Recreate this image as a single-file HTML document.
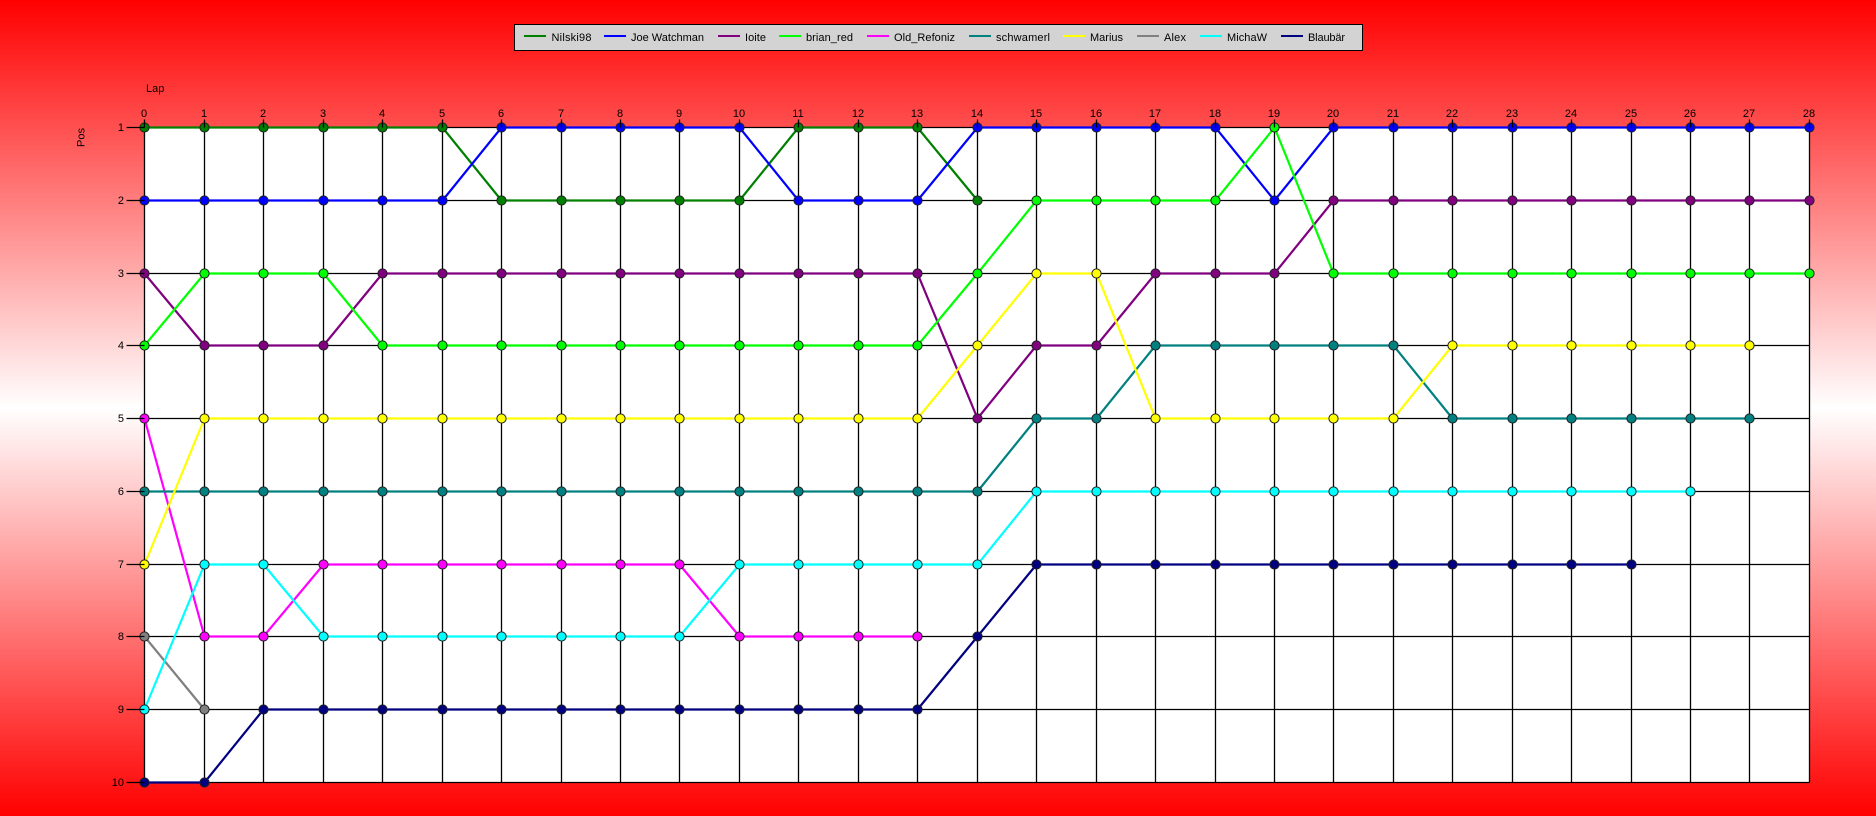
<!DOCTYPE html>
<html>
<head>
<meta charset="utf-8">
<title>Race chart</title>
<style>
html,body{margin:0;padding:0;width:1876px;height:816px;overflow:hidden;background:#fff}
svg{display:block}
text{font-family:"Liberation Sans",sans-serif;font-size:11px;fill:#000}
</style>
</head>
<body>
<svg xmlns="http://www.w3.org/2000/svg" width="1876" height="816" viewBox="0 0 1876 816">
<defs>
<linearGradient id="bg" x1="0" y1="0" x2="0" y2="1">
<stop offset="0" stop-color="#ff0000"/><stop offset=".5" stop-color="#ffffff"/><stop offset="1" stop-color="#ff0000"/>
</linearGradient>
<marker id="m1" markerUnits="userSpaceOnUse" markerWidth="13" markerHeight="13" refX="6.5" refY="6.5"><circle cx="6.5" cy="6.5" r="4.6" fill="#008000" stroke="#222" stroke-width="1"/></marker>
<marker id="m2" markerUnits="userSpaceOnUse" markerWidth="13" markerHeight="13" refX="6.5" refY="6.5"><circle cx="6.5" cy="6.5" r="4.6" fill="#0000ff" stroke="#222" stroke-width="1"/></marker>
<marker id="m3" markerUnits="userSpaceOnUse" markerWidth="13" markerHeight="13" refX="6.5" refY="6.5"><circle cx="6.5" cy="6.5" r="4.6" fill="#800080" stroke="#222" stroke-width="1"/></marker>
<marker id="m4" markerUnits="userSpaceOnUse" markerWidth="13" markerHeight="13" refX="6.5" refY="6.5"><circle cx="6.5" cy="6.5" r="4.6" fill="#00ff00" stroke="#222" stroke-width="1"/></marker>
<marker id="m5" markerUnits="userSpaceOnUse" markerWidth="13" markerHeight="13" refX="6.5" refY="6.5"><circle cx="6.5" cy="6.5" r="4.6" fill="#ff00ff" stroke="#222" stroke-width="1"/></marker>
<marker id="m6" markerUnits="userSpaceOnUse" markerWidth="13" markerHeight="13" refX="6.5" refY="6.5"><circle cx="6.5" cy="6.5" r="4.6" fill="#008080" stroke="#222" stroke-width="1"/></marker>
<marker id="m7" markerUnits="userSpaceOnUse" markerWidth="13" markerHeight="13" refX="6.5" refY="6.5"><circle cx="6.5" cy="6.5" r="4.6" fill="#ffff00" stroke="#222" stroke-width="1"/></marker>
<marker id="m8" markerUnits="userSpaceOnUse" markerWidth="13" markerHeight="13" refX="6.5" refY="6.5"><circle cx="6.5" cy="6.5" r="4.6" fill="#808080" stroke="#222" stroke-width="1"/></marker>
<marker id="m9" markerUnits="userSpaceOnUse" markerWidth="13" markerHeight="13" refX="6.5" refY="6.5"><circle cx="6.5" cy="6.5" r="4.6" fill="#00ffff" stroke="#222" stroke-width="1"/></marker>
<marker id="m10" markerUnits="userSpaceOnUse" markerWidth="13" markerHeight="13" refX="6.5" refY="6.5"><circle cx="6.5" cy="6.5" r="4.6" fill="#000080" stroke="#222" stroke-width="1"/></marker>
</defs>

<rect width="1876" height="816" fill="url(#bg)"/>
<rect x="144" y="127" width="1665" height="655" fill="#fff"/>

<g transform="translate(.5 .5)">
<path fill="none" stroke="#000" stroke-width="1.3" d="M144 127H1809M144 200H1809M144 273H1809M144 345H1809M144 418H1809M144 491H1809M144 564H1809M144 636H1809M144 709H1809M144 782H1809M144 127V782M204 127V782M263 127V782M323 127V782M382 127V782M442 127V782M501 127V782M561 127V782M620 127V782M679 127V782M739 127V782M798 127V782M858 127V782M917 127V782M977 127V782M1036 127V782M1096 127V782M1155 127V782M1215 127V782M1274 127V782M1333 127V782M1393 127V782M1452 127V782M1512 127V782M1571 127V782M1631 127V782M1690 127V782M1749 127V782M1809 127V782"/>

<g fill="none" stroke-width="2.2">
<polyline stroke="#008000" marker-start="url(#m1)" marker-mid="url(#m1)" marker-end="url(#m1)" points="144,127 204,127 263,127 323,127 382,127 442,127 501,200 561,200 620,200 679,200 739,200 798,127 858,127 917,127 977,200"/>
<polyline stroke="#0000ff" marker-start="url(#m2)" marker-mid="url(#m2)" marker-end="url(#m2)" points="144,200 204,200 263,200 323,200 382,200 442,200 501,127 561,127 620,127 679,127 739,127 798,200 858,200 917,200 977,127 1036,127 1096,127 1155,127 1215,127 1274,200 1333,127 1393,127 1452,127 1512,127 1571,127 1631,127 1690,127 1749,127 1809,127"/>
<polyline stroke="#800080" marker-start="url(#m3)" marker-mid="url(#m3)" marker-end="url(#m3)" points="144,273 204,345 263,345 323,345 382,273 442,273 501,273 561,273 620,273 679,273 739,273 798,273 858,273 917,273 977,418 1036,345 1096,345 1155,273 1215,273 1274,273 1333,200 1393,200 1452,200 1512,200 1571,200 1631,200 1690,200 1749,200 1809,200"/>
<polyline stroke="#00ff00" marker-start="url(#m4)" marker-mid="url(#m4)" marker-end="url(#m4)" points="144,345 204,273 263,273 323,273 382,345 442,345 501,345 561,345 620,345 679,345 739,345 798,345 858,345 917,345 977,273 1036,200 1096,200 1155,200 1215,200 1274,127 1333,273 1393,273 1452,273 1512,273 1571,273 1631,273 1690,273 1749,273 1809,273"/>
<polyline stroke="#ff00ff" marker-start="url(#m5)" marker-mid="url(#m5)" marker-end="url(#m5)" points="144,418 204,636 263,636 323,564 382,564 442,564 501,564 561,564 620,564 679,564 739,636 798,636 858,636 917,636"/>
<polyline stroke="#008080" marker-start="url(#m6)" marker-mid="url(#m6)" marker-end="url(#m6)" points="144,491 204,491 263,491 323,491 382,491 442,491 501,491 561,491 620,491 679,491 739,491 798,491 858,491 917,491 977,491 1036,418 1096,418 1155,345 1215,345 1274,345 1333,345 1393,345 1452,418 1512,418 1571,418 1631,418 1690,418 1749,418"/>
<polyline stroke="#ffff00" marker-start="url(#m7)" marker-mid="url(#m7)" marker-end="url(#m7)" points="144,564 204,418 263,418 323,418 382,418 442,418 501,418 561,418 620,418 679,418 739,418 798,418 858,418 917,418 977,345 1036,273 1096,273 1155,418 1215,418 1274,418 1333,418 1393,418 1452,345 1512,345 1571,345 1631,345 1690,345 1749,345"/>
<polyline stroke="#808080" marker-start="url(#m8)" marker-end="url(#m8)" points="144,636 204,709"/>
<polyline stroke="#00ffff" marker-start="url(#m9)" marker-mid="url(#m9)" marker-end="url(#m9)" points="144,709 204,564 263,564 323,636 382,636 442,636 501,636 561,636 620,636 679,636 739,564 798,564 858,564 917,564 977,564 1036,491 1096,491 1155,491 1215,491 1274,491 1333,491 1393,491 1452,491 1512,491 1571,491 1631,491 1690,491"/>
<polyline stroke="#000080" marker-start="url(#m10)" marker-mid="url(#m10)" marker-end="url(#m10)" points="144,782 204,782 263,709 323,709 382,709 442,709 501,709 561,709 620,709 679,709 739,709 798,709 858,709 917,709 977,636 1036,564 1096,564 1155,564 1215,564 1274,564 1333,564 1393,564 1452,564 1512,564 1571,564 1631,564"/>
</g>

<path fill="none" stroke="#000" stroke-width="1.3" d="M126 127H144M126 200H144M126 273H144M126 345H144M126 418H144M126 491H144M126 564H144M126 636H144M126 709H144M126 782H144M144 119V127M204 119V127M263 119V127M323 119V127M382 119V127M442 119V127M501 119V127M561 119V127M620 119V127M679 119V127M739 119V127M798 119V127M858 119V127M917 119V127M977 119V127M1036 119V127M1096 119V127M1155 119V127M1215 119V127M1274 119V127M1333 119V127M1393 119V127M1452 119V127M1512 119V127M1571 119V127M1631 119V127M1690 119V127M1749 119V127M1809 119V127"/>
</g>

<!-- Legend -->
<rect x="514.5" y="24.5" width="848" height="26" fill="#d3d3d3" stroke="#000" stroke-width="1" shape-rendering="crispEdges"/>
<g stroke-width="2" shape-rendering="crispEdges">
<path stroke="#008000" d="M524 36H546"/>
<path stroke="#0000ff" d="M604 36H626"/>
<path stroke="#800080" d="M718 36H740"/>
<path stroke="#00ff00" d="M779 36H801"/>
<path stroke="#ff00ff" d="M867 36H889"/>
<path stroke="#008080" d="M969 36H991"/>
<path stroke="#ffff00" d="M1063 36H1085"/>
<path stroke="#808080" d="M1137 36H1159"/>
<path stroke="#00ffff" d="M1200 36H1222"/>
<path stroke="#000080" d="M1281 36H1303"/>
</g>
<text x="551.5" y="41" textLength="40">Nilski98</text>
<text x="631" y="41" textLength="73">Joe Watchman</text>
<text x="745" y="41" textLength="21">Ioite</text>
<text x="806" y="41" textLength="47">brian_red</text>
<text x="894" y="41" textLength="61">Old_Refoniz</text>
<text x="996" y="41" textLength="54">schwamerl</text>
<text x="1090" y="41" textLength="33">Marius</text>
<text x="1164" y="41" textLength="22">Alex</text>
<text x="1227" y="41" textLength="40">MichaW</text>
<text x="1308" y="41" textLength="37">Blaubär</text>

<!-- Axis titles -->
<text x="146" y="92">Lap</text>
<text transform="translate(84.5 147) rotate(-90)">Pos</text>

<!-- Left labels -->
<g text-anchor="end">
<text x="124" y="131">1</text>
<text x="124" y="204">2</text>
<text x="124" y="277">3</text>
<text x="124" y="349">4</text>
<text x="124" y="422">5</text>
<text x="124" y="495">6</text>
<text x="124" y="568">7</text>
<text x="124" y="640">8</text>
<text x="124" y="713">9</text>
<text x="124" y="786">10</text>
</g>

<!-- Top labels -->
<g text-anchor="middle">
<text x="144" y="117">0</text>
<text x="204" y="117">1</text>
<text x="263" y="117">2</text>
<text x="323" y="117">3</text>
<text x="382" y="117">4</text>
<text x="442" y="117">5</text>
<text x="501" y="117">6</text>
<text x="561" y="117">7</text>
<text x="620" y="117">8</text>
<text x="679" y="117">9</text>
<text x="739" y="117">10</text>
<text x="798" y="117">11</text>
<text x="858" y="117">12</text>
<text x="917" y="117">13</text>
<text x="977" y="117">14</text>
<text x="1036" y="117">15</text>
<text x="1096" y="117">16</text>
<text x="1155" y="117">17</text>
<text x="1215" y="117">18</text>
<text x="1274" y="117">19</text>
<text x="1333" y="117">20</text>
<text x="1393" y="117">21</text>
<text x="1452" y="117">22</text>
<text x="1512" y="117">23</text>
<text x="1571" y="117">24</text>
<text x="1631" y="117">25</text>
<text x="1690" y="117">26</text>
<text x="1749" y="117">27</text>
<text x="1809" y="117">28</text>
</g>
</svg>
</body>
</html>
